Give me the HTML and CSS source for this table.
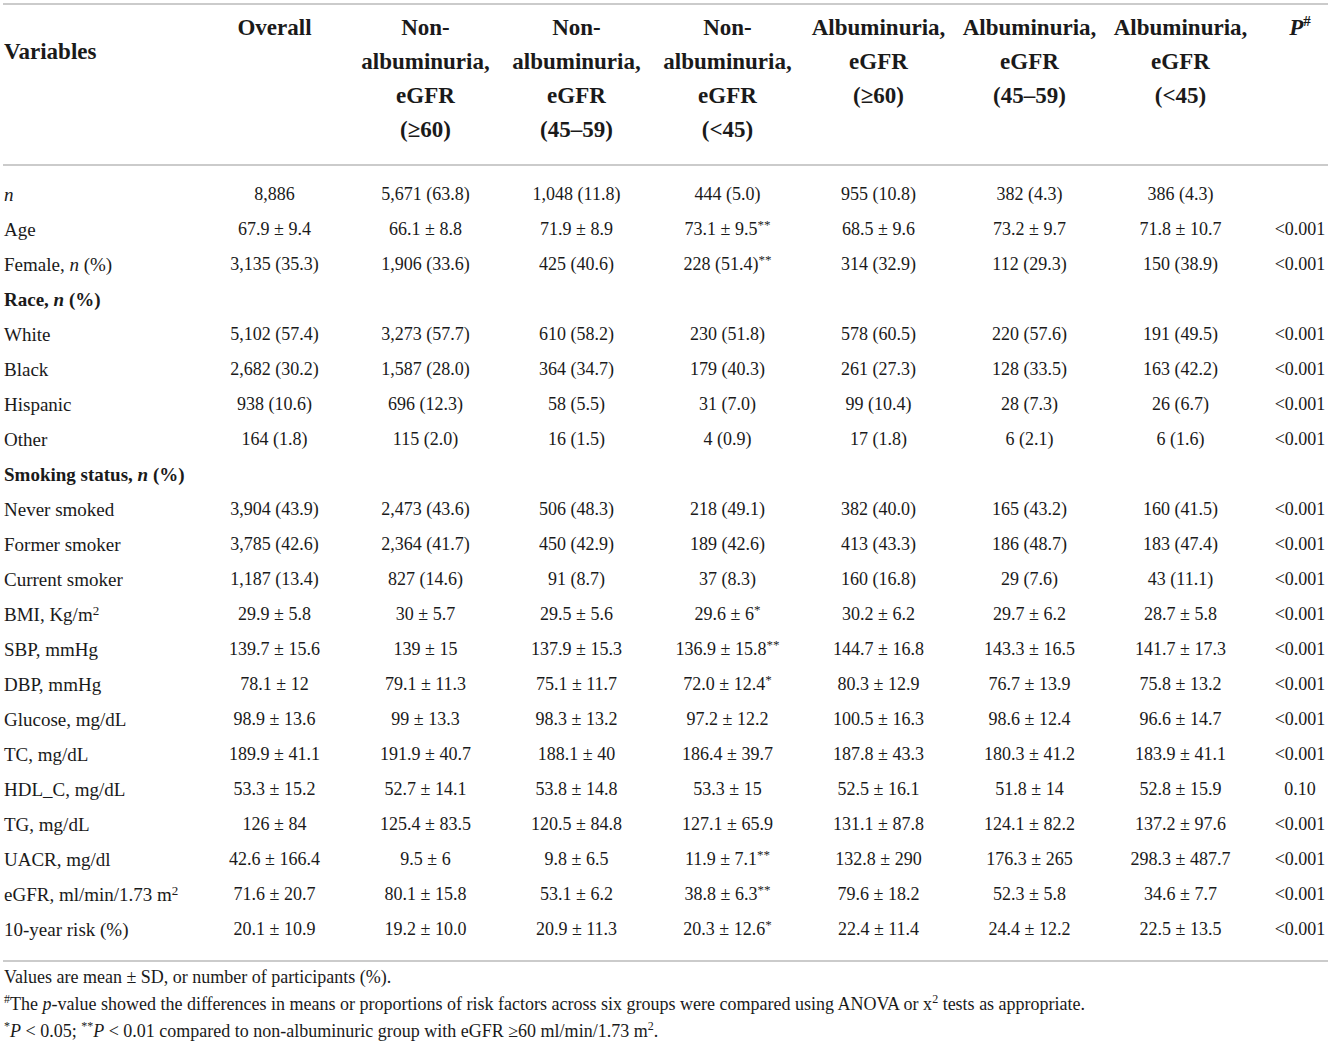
FILE: index.html
```html
<!DOCTYPE html>
<html>
<head>
<meta charset="utf-8">
<link rel="stylesheet" href="styles.css">
</head>
<body>
<table class="tbl">
<colgroup>
<col class="c-var"><col class="c-d"><col class="c-d"><col class="c-d"><col class="c-d"><col class="c-d"><col class="c-d"><col class="c-d"><col class="c-p">
</colgroup>
<thead>
<tr>
<th class="h-var">Variables</th>
<th>Overall</th>
<th>Non-<br>albuminuria,<br>eGFR<br>(≥60)</th>
<th>Non-<br>albuminuria,<br>eGFR<br>(45–59)</th>
<th>Non-<br>albuminuria,<br>eGFR<br>(&lt;45)</th>
<th>Albuminuria,<br>eGFR<br>(≥60)</th>
<th>Albuminuria,<br>eGFR<br>(45–59)</th>
<th>Albuminuria,<br>eGFR<br>(&lt;45)</th>
<th class="h-p"><i>P</i><sup>#</sup></th>
</tr>
</thead>
<tbody>
<tr class="first"><td class="var"><i>n</i></td><td>8,886</td><td>5,671 (63.8)</td><td>1,048 (11.8)</td><td>444 (5.0)</td><td>955 (10.8)</td><td>382 (4.3)</td><td>386 (4.3)</td><td class="p"></td></tr>
<tr><td class="var">Age</td><td>67.9 ± 9.4</td><td>66.1 ± 8.8</td><td>71.9 ± 8.9</td><td>73.1 ± 9.5<sup>**</sup></td><td>68.5 ± 9.6</td><td>73.2 ± 9.7</td><td>71.8 ± 10.7</td><td class="p">&lt;0.001</td></tr>
<tr><td class="var">Female, <i>n</i> (%)</td><td>3,135 (35.3)</td><td>1,906 (33.6)</td><td>425 (40.6)</td><td>228 (51.4)<sup>**</sup></td><td>314 (32.9)</td><td>112 (29.3)</td><td>150 (38.9)</td><td class="p">&lt;0.001</td></tr>
<tr><td class="var sec">Race, <i>n</i> (%)</td><td></td><td></td><td></td><td></td><td></td><td></td><td></td><td class="p"></td></tr>
<tr><td class="var">White</td><td>5,102 (57.4)</td><td>3,273 (57.7)</td><td>610 (58.2)</td><td>230 (51.8)</td><td>578 (60.5)</td><td>220 (57.6)</td><td>191 (49.5)</td><td class="p">&lt;0.001</td></tr>
<tr><td class="var">Black</td><td>2,682 (30.2)</td><td>1,587 (28.0)</td><td>364 (34.7)</td><td>179 (40.3)</td><td>261 (27.3)</td><td>128 (33.5)</td><td>163 (42.2)</td><td class="p">&lt;0.001</td></tr>
<tr><td class="var">Hispanic</td><td>938 (10.6)</td><td>696 (12.3)</td><td>58 (5.5)</td><td>31 (7.0)</td><td>99 (10.4)</td><td>28 (7.3)</td><td>26 (6.7)</td><td class="p">&lt;0.001</td></tr>
<tr><td class="var">Other</td><td>164 (1.8)</td><td>115 (2.0)</td><td>16 (1.5)</td><td>4 (0.9)</td><td>17 (1.8)</td><td>6 (2.1)</td><td>6 (1.6)</td><td class="p">&lt;0.001</td></tr>
<tr><td class="var sec">Smoking status, <i>n</i> (%)</td><td></td><td></td><td></td><td></td><td></td><td></td><td></td><td class="p"></td></tr>
<tr><td class="var">Never smoked</td><td>3,904 (43.9)</td><td>2,473 (43.6)</td><td>506 (48.3)</td><td>218 (49.1)</td><td>382 (40.0)</td><td>165 (43.2)</td><td>160 (41.5)</td><td class="p">&lt;0.001</td></tr>
<tr><td class="var">Former smoker</td><td>3,785 (42.6)</td><td>2,364 (41.7)</td><td>450 (42.9)</td><td>189 (42.6)</td><td>413 (43.3)</td><td>186 (48.7)</td><td>183 (47.4)</td><td class="p">&lt;0.001</td></tr>
<tr><td class="var">Current smoker</td><td>1,187 (13.4)</td><td>827 (14.6)</td><td>91 (8.7)</td><td>37 (8.3)</td><td>160 (16.8)</td><td>29 (7.6)</td><td>43 (11.1)</td><td class="p">&lt;0.001</td></tr>
<tr><td class="var">BMI, Kg/m<sup>2</sup></td><td>29.9 ± 5.8</td><td>30 ± 5.7</td><td>29.5 ± 5.6</td><td>29.6 ± 6<sup>*</sup></td><td>30.2 ± 6.2</td><td>29.7 ± 6.2</td><td>28.7 ± 5.8</td><td class="p">&lt;0.001</td></tr>
<tr><td class="var">SBP, mmHg</td><td>139.7 ± 15.6</td><td>139 ± 15</td><td>137.9 ± 15.3</td><td>136.9 ± 15.8<sup>**</sup></td><td>144.7 ± 16.8</td><td>143.3 ± 16.5</td><td>141.7 ± 17.3</td><td class="p">&lt;0.001</td></tr>
<tr><td class="var">DBP, mmHg</td><td>78.1 ± 12</td><td>79.1 ± 11.3</td><td>75.1 ± 11.7</td><td>72.0 ± 12.4<sup>*</sup></td><td>80.3 ± 12.9</td><td>76.7 ± 13.9</td><td>75.8 ± 13.2</td><td class="p">&lt;0.001</td></tr>
<tr><td class="var">Glucose, mg/dL</td><td>98.9 ± 13.6</td><td>99 ± 13.3</td><td>98.3 ± 13.2</td><td>97.2 ± 12.2</td><td>100.5 ± 16.3</td><td>98.6 ± 12.4</td><td>96.6 ± 14.7</td><td class="p">&lt;0.001</td></tr>
<tr><td class="var">TC, mg/dL</td><td>189.9 ± 41.1</td><td>191.9 ± 40.7</td><td>188.1 ± 40</td><td>186.4 ± 39.7</td><td>187.8 ± 43.3</td><td>180.3 ± 41.2</td><td>183.9 ± 41.1</td><td class="p">&lt;0.001</td></tr>
<tr><td class="var">HDL_C, mg/dL</td><td>53.3 ± 15.2</td><td>52.7 ± 14.1</td><td>53.8 ± 14.8</td><td>53.3 ± 15</td><td>52.5 ± 16.1</td><td>51.8 ± 14</td><td>52.8 ± 15.9</td><td class="p">0.10</td></tr>
<tr><td class="var">TG, mg/dL</td><td>126 ± 84</td><td>125.4 ± 83.5</td><td>120.5 ± 84.8</td><td>127.1 ± 65.9</td><td>131.1 ± 87.8</td><td>124.1 ± 82.2</td><td>137.2 ± 97.6</td><td class="p">&lt;0.001</td></tr>
<tr><td class="var">UACR, mg/dl</td><td>42.6 ± 166.4</td><td>9.5 ± 6</td><td>9.8 ± 6.5</td><td>11.9 ± 7.1<sup>**</sup></td><td>132.8 ± 290</td><td>176.3 ± 265</td><td>298.3 ± 487.7</td><td class="p">&lt;0.001</td></tr>
<tr><td class="var">eGFR, ml/min/1.73 m<sup>2</sup></td><td>71.6 ± 20.7</td><td>80.1 ± 15.8</td><td>53.1 ± 6.2</td><td>38.8 ± 6.3<sup>**</sup></td><td>79.6 ± 18.2</td><td>52.3 ± 5.8</td><td>34.6 ± 7.7</td><td class="p">&lt;0.001</td></tr>
<tr class="last"><td class="var">10-year risk (%)</td><td>20.1 ± 10.9</td><td>19.2 ± 10.0</td><td>20.9 ± 11.3</td><td>20.3 ± 12.6<sup>*</sup></td><td>22.4 ± 11.4</td><td>24.4 ± 12.2</td><td>22.5 ± 13.5</td><td class="p">&lt;0.001</td></tr>
</tbody>
</table>
<div class="notes">
<p>Values are mean ± SD, or number of participants (%).</p>
<p><sup>#</sup>The <i>p</i>-value showed the differences in means or proportions of risk factors across six groups were compared using ANOVA or x<sup>2</sup> tests as appropriate.</p>
<p><sup>*</sup><i>P</i> &lt; 0.05; <sup>**</sup><i>P</i> &lt; 0.01 compared to non-albuminuric group with eGFR ≥60 ml/min/1.73 m<sup>2</sup>.</p>
</div>
</body>
</html>
```
FILE: styles.css
```css
html, body {
  margin: 0;
  padding: 0;
  background: #fff;
  color: #1a1a1a;
}
body {
  font-family: "Liberation Serif", "Times New Roman", serif;
  padding: 0 3px;
}
.tbl {
  width: 1325px;
  border-collapse: collapse;
  table-layout: fixed;
  margin-top: 3px;
}
.c-var { width: 196px; }
.c-d { width: 151px; }
.c-p { width: 72px; }
thead tr {
  border-top: 2px solid #cbcbcb;
  border-bottom: 2px solid #cbcbcb;
}
th {
  font-size: 23px;
  font-weight: bold;
  line-height: 34px;
  text-align: center;
  vertical-align: top;
  padding: 6px 0 17px;
  white-space: nowrap;
}
th.h-var {
  text-align: left;
  padding-left: 1px;
  padding-top: 30px;
}
th.h-p {
  padding-left: 16px;
}
th sup {
  font-size: 15px;
  line-height: 0;
  vertical-align: 9px;
}
td {
  font-size: 18px;
  line-height: 35px;
  padding: 0;
  text-align: center;
  vertical-align: middle;
  white-space: nowrap;
}
td.var {
  font-size: 19px;
  text-align: left;
  padding-left: 1px;
}
td.sec {
  font-weight: bold;
}
td.p {
  padding-left: 16px;
}
td sup {
  font-size: 13px;
  line-height: 0;
  vertical-align: 6px;
}
tr.first td {
  padding-top: 11px;
}
tr.last td {
  padding-bottom: 13px;
}
tbody tr.last {
  border-bottom: 2px solid #cbcbcb;
}
.notes {
  padding-top: 2px;
  font-size: 18px;
  line-height: 27px;
}
.notes p {
  margin: 0;
  padding-left: 1px;
}
.notes sup {
  font-size: 12px;
  line-height: 0;
  vertical-align: 7px;
}
```
